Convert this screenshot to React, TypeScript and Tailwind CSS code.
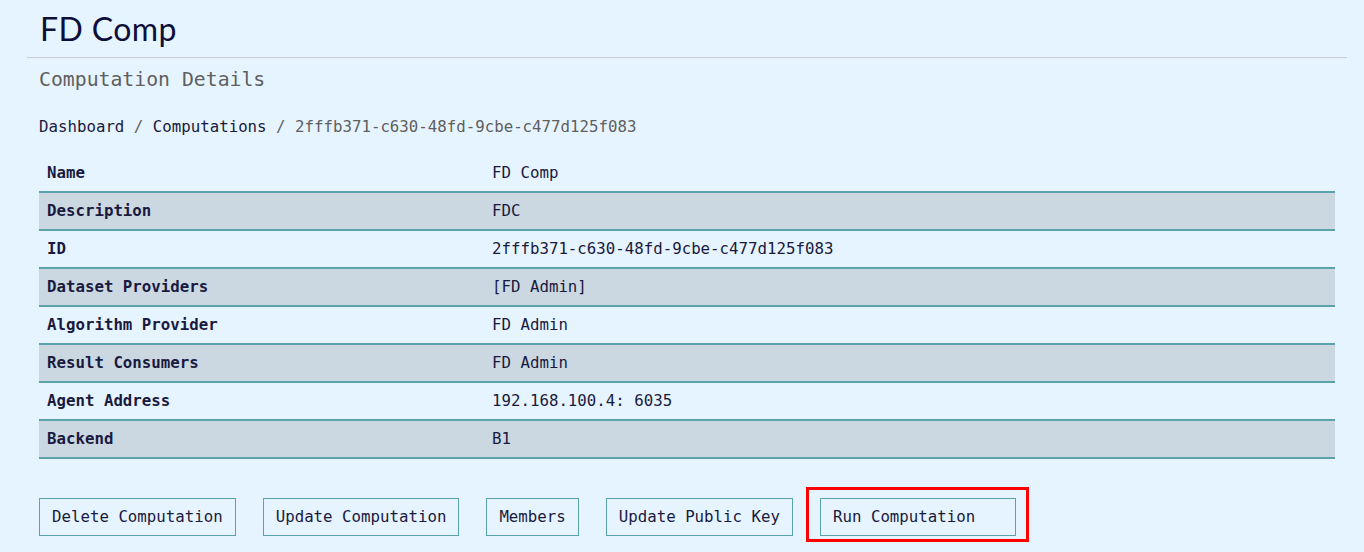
import React from 'react';

const rows: [string, string][] = [
  ['Name', 'FD Comp'],
  ['Description', 'FDC'],
  ['ID', '2fffb371-c630-48fd-9cbe-c477d125f083'],
  ['Dataset Providers', '[FD Admin]'],
  ['Algorithm Provider', 'FD Admin'],
  ['Result Consumers', 'FD Admin'],
  ['Agent Address', '192.168.100.4: 6035'],
  ['Backend', 'B1'],
];

const mono = "font-['DejaVu_Sans_Mono','Liberation_Mono',monospace]";

function ActionButton({ label, wide }: { label: string; wide?: boolean }) {
  return (
    <button
      className={`h-[38px] border border-[#5aa3ad] bg-transparent text-[15.75px] text-[#1a1a40] text-left px-3 ${wide ? 'w-[196px]' : ''}`}
    >
      {label}
    </button>
  );
}

export default function App() {
  return (
    <div className={`min-h-screen w-full bg-[#e6f4ff] ${mono}`}>
      <div className="h-[57px] flex items-center pl-[40px]">
        <h1 className="font-['Lato','Open_Sans',sans-serif] text-[32px] tracking-[0.4px] text-[#0e0e3a] leading-none">FD Comp</h1>
      </div>
      <div className="ml-[27px] mr-[17px] border-t border-[#c8ccd1]" />

      <div className="px-[39px]">
        <h2 className="mt-[8px] text-[19.8px] leading-[28px] text-[#5f5f5f]">Computation Details</h2>

        <div className="mt-[21px] text-[15.75px] leading-[24px] text-[#5f5f5f]">
          <span className="text-[#1a1a40]">Dashboard</span>
          <span> / </span>
          <span className="text-[#1a1a40]">Computations</span>
          <span> / </span>
          <span>2fffb371-c630-48fd-9cbe-c477d125f083</span>
        </div>

        <table className="mt-[15px] w-[1296px] border-collapse text-[15.75px] text-[#1a1a40]">
          <tbody>
            {rows.map(([k, v], i) => (
              <tr
                key={k}
                className={`h-[38px] border-b-2 border-[#5aa3ad] ${i % 2 === 1 ? 'bg-[#cbd8e1]' : ''}`}
              >
                <td className="w-[445px] pl-2 font-bold">{k}</td>
                <td className="pl-2">{v}</td>
              </tr>
            ))}
          </tbody>
        </table>

        <div className="mt-[39px] flex items-center gap-[27px]">
          <ActionButton label="Delete Computation" />
          <ActionButton label="Update Computation" />
          <ActionButton label="Members" />
          <ActionButton label="Update Public Key" />
          <div className="relative">
            <ActionButton label="Run Computation" wide />
            <div className="absolute left-[-14px] right-[-13px] top-[-11px] bottom-[-6px] border-[3px] border-[#ff0000] pointer-events-none" />
          </div>
        </div>
      </div>
    </div>
  );
}
